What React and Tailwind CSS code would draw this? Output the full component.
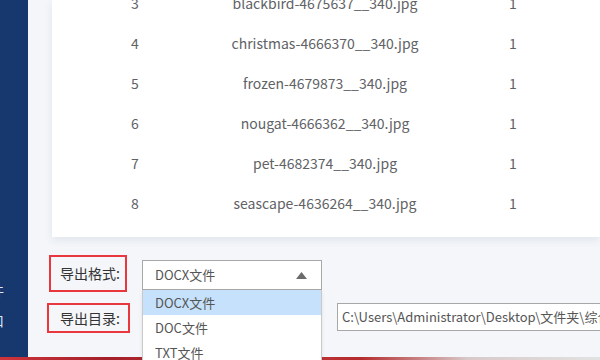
import React from "react";

const rows = [
  ["3", "blackbird-4675637__340.jpg"],
  ["4", "christmas-4666370__340.jpg"],
  ["5", "frozen-4679873__340.jpg"],
  ["6", "nougat-4666362__340.jpg"],
  ["7", "pet-4682374__340.jpg"],
  ["8", "seascape-4636264__340.jpg"],
];

export default function App() {
  return (
    <div
      className="relative w-[600px] h-[360px] overflow-hidden flex flex-col bg-[#f4f6f9]"
      style={{ fontFamily: '"Microsoft YaHei", "Noto Sans CJK SC", "Noto Sans", sans-serif' }}
    >
      <div className="flex flex-1 min-h-0">
        {/* sidebar */}
        <div className="w-[28px] shrink-0 bg-[#17386f] flex flex-col overflow-hidden">
          <div className="mt-[282px] -ml-[10px] text-[14px] leading-[16px] text-[#dfe6f2] whitespace-nowrap">件</div>
          <div className="mt-[14px] -ml-[10px] text-[14px] leading-[16px] text-[#dfe6f2] whitespace-nowrap">口</div>
        </div>
        {/* content */}
        <div className="flex-1 min-w-0 flex flex-col">
          <div className="ml-[24px] h-[237px] shrink-0 bg-white shadow-[0_3px_8px_rgba(60,90,140,0.10)] overflow-hidden">
            <div className="-mt-[17px]">
              {rows.map(([n, name]) => (
                <div
                  key={n}
                  className="grid grid-cols-[166px_214px_162px] h-[40px] items-center text-center text-[14px] text-[#606266]"
                >
                  <div>{n}</div>
                  <div className="whitespace-nowrap">{name}</div>
                  <div>1</div>
                </div>
              ))}
            </div>
          </div>
          {/* form */}
          <div className="flex items-center mt-[18px]">
            <div className="ml-[21px] w-[78px] h-[37px] shrink-0 border-2 border-[#e8383d] flex items-center pl-[9px] text-[14px] text-[#333] whitespace-nowrap">
              导出格式:
            </div>
            <div className="relative ml-[15px] mt-[3px] shrink-0">
              <div className="w-[180px] h-[30px] border border-[#a8a8a8] bg-white flex items-center justify-between pl-[12px] pr-[14px] text-[13px] text-[#555]">
                <span>DOCX文件</span>
                <svg width="11" height="7" viewBox="0 0 11 7">
                  <path d="M0 7 L5.5 0 L11 7 Z" fill="#6b6b6b" />
                </svg>
              </div>
              <div className="absolute z-10 left-0 top-[30px] w-[180px] bg-white border-x border-[#c9c9c9] text-[13px] text-[#555] shadow-[0_2px_4px_rgba(0,0,0,0.08)]">
                <div className="h-[25px] flex items-center pl-[12px] bg-[#c5e1fb]">DOCX文件</div>
                <div className="h-[25px] flex items-center pl-[12px]">DOC文件</div>
                <div className="h-[25px] flex items-center pl-[12px]">TXT文件</div>
              </div>
            </div>
          </div>
          <div className="flex items-start mt-[11px]">
            <div className="ml-[19px] w-[83px] h-[30px] shrink-0 border-2 border-[#e8383d] flex items-center pl-[11px] text-[14px] text-[#333] whitespace-nowrap">
              导出目录:
            </div>
            <div className="ml-[207px] w-[300px] h-[28px] shrink-0 border border-[#a8a8a8] bg-white flex items-center pl-[4px] text-[13px] text-[#555] whitespace-nowrap overflow-hidden">
              C:\Users\Administrator\Desktop\文件夹\综合\
            </div>
          </div>
        </div>
      </div>
      <div className="h-[3px] shrink-0 bg-[linear-gradient(to_right,#d0343b_0%,#a32029_18%,#c9373a_45%,#b42c2e_60%,#d8c9c9_78%,#e2e2e2_100%)]" />
    </div>
  );
}
